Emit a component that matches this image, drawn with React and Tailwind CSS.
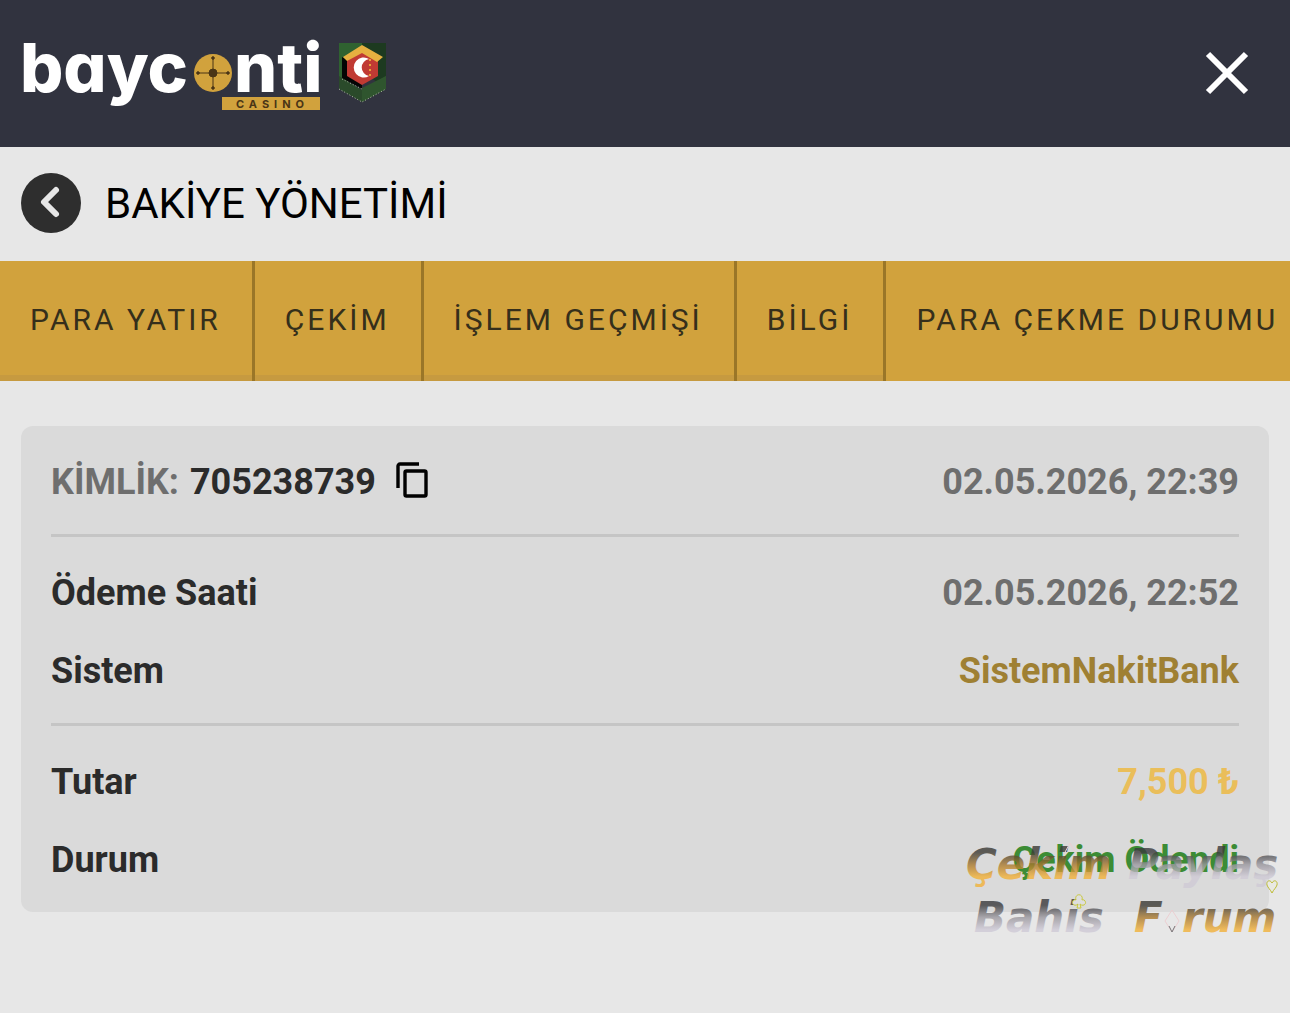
import { useState } from 'react'

const tabs = ['PARA YATIR', 'ÇEKİM', 'İŞLEM GEÇMİŞİ', 'BİLGİ', 'PARA ÇEKME DURUMU']

const Logo = () => (
    <svg width="304" height="104" viewBox="0 -15 304 104" role="img" aria-label="bayconti casino">
        <g fill="#fff" className="font-['Inter',sans-serif] text-[68px] font-extrabold [font-feature-settings:'cv11']">
            <text x="0" y="56">bayc</text>
            <text x="214" y="56">nti</text>
        </g>
        {/* Roulette wheel */}
        <circle cx="193" cy="37" r="19" fill="#d1a23d" />
        <g stroke="#4a3516" strokeWidth="1" fill="#4a3516">
            <path d="M193 22v30M178 37h30" />
            <circle cx="193" cy="37" r="4" />
            <circle cx="193" cy="22" r="1.3" />
            <circle cx="193" cy="52" r="1.3" />
            <circle cx="178" cy="37" r="1.3" />
            <circle cx="208" cy="37" r="1.3" />
        </g>
        <rect x="202" y="61" width="98" height="13" fill="#d1a23d" />
        <text x="216" y="72" fill="#4a3516" className="font-['Inter',sans-serif] text-[11px] font-bold tracking-[5px]">CASINO</text>
    </svg>
)

const Badge = () => (
    <svg width="48" height="62" viewBox="0 0 48 62" aria-hidden="true">
        <path d="M1 1H24V30L1 46Z" fill="#2f6230" />
        <path d="M24 1H48V46L24 30Z" fill="#1d3a20" />
        <path d="M1 34L24 48L48 34V47L24 60L1 47Z" fill="#2a4a2a" />
        <path d="M24 46L48 34V47L24 60Z" fill="#2f552e" />
        <path d="M4 15L24 26V47L4 36Z" fill="#050505" />
        <path d="M24 9L40 18V34L24 43L9 34V18Z" fill="#c03a33" />
        <path d="M5 15L24 3L45 15L39 20L24 11L9 19Z" fill="#e6b040" />
        <path d="M31 17A10 10 0 1 0 31 34A8.6 8.6 0 0 1 31 17Z" fill="#fff" />
        <path d="M32 17v17" stroke="#e8a13a" strokeWidth="2" strokeDasharray="2 3" />
        <path d="M1 47L24 60L48 47M4 37L24 47" fill="none" stroke="#b8bcae" strokeDasharray="1 2" />
    </svg>
)

const Watermark = () => (
    <svg width="326" height="110" viewBox="0 0 326 110" aria-hidden="true"
        className="absolute right-0 -bottom-8 pointer-events-none"
    >
        <defs>
            <linearGradient id="gold" x1="0" y1="0" x2="0" y2="1">
                <stop offset="0.25" stopColor="#3b3a35" />
                <stop offset="0.5" stopColor="#a8782e" />
                <stop offset="0.75" stopColor="#f2b13a" />
            </linearGradient>
            <linearGradient id="silver" x1="0" y1="0" x2="0" y2="1">
                <stop offset="0.25" stopColor="#3a3a3c" />
                <stop offset="0.5" stopColor="#9a979e" />
                <stop offset="0.75" stopColor="#cfcad6" />
            </linearGradient>
        </defs>
        <g opacity="0.8" className="font-['DejaVu_Sans',sans-serif] text-[42px] font-bold italic">
            <text x="2" y="45" fill="url(#gold)">Çekim</text>
            <text x="164" y="45" fill="url(#silver)">Paylaş</text>
            <text x="10" y="98" fill="url(#silver)">Bahis</text>
            <text x="170" y="98" fill="url(#gold)">F</text>
            <text x="218" y="98" fill="url(#gold)">rum</text>
        </g>
        {/* Card suits */}
        <g fill="none" strokeWidth="1">
            <path d="M308 49c-2-4-6-2-5 2 1 3 3 4 5 8 2-4 4-5 5-8 1-4-3-6-5-2z" fill="#e9e9e2" stroke="#bdbb35" />
            <path d="M113 74l1-4c-3 3-7 0-5-3 1-2 3-1 3-1-2-7 8-7 6 0 0 0 2-1 3 1 2 3-2 6-5 3l1 4z" fill="#dedede" stroke="#c9c83c" />
            <path d="M208 76l7 11-7 11-7-11z" stroke="#eccfd2" />
            <path d="M205 92l3 6 3-6" stroke="#77777a" />
            <path d="M100 20l6-11 6 11" stroke="#eccfd2" />
        </g>
    </svg>
)

const Row = ({ label, children }) => (
    <div className="h-[78px] pt-1 flex items-center justify-between">
        <dt>{label}</dt>
        <dd>{children}</dd>
    </div>
)

export default function App() {
    const [active, setActive] = useState(4)

    return (
        <div className="min-h-screen bg-[#e7e7e7] font-['Roboto',sans-serif] text-[#2b2b2b]">
            {/* Header */}
            <header className="h-[147px] pl-5 pr-10 pb-[2px] flex items-center justify-between bg-[#31333f]">
                <a href="#" className="flex items-center gap-[14px]">
                    <Logo />
                    <Badge />
                </a>
                <button aria-label="Kapat">
                    <svg width="46" height="46" viewBox="0 0 46 46" stroke="#fff" strokeWidth="6">
                        <path d="M4 4L42 42M42 4L4 42" />
                    </svg>
                </button>
            </header>

            {/* Title */}
            <div className="h-[114px] px-[21px] pb-[2px] flex items-center gap-6">
                <button aria-label="Geri" className="w-[60px] h-[60px] rounded-full bg-[#2e2e2e] flex items-center justify-center">
                    <svg width="60" height="60" viewBox="0 0 60 60" fill="none" stroke="#e7e7e7" strokeWidth="6" strokeLinecap="round" strokeLinejoin="round">
                        <path d="M35 17L23 29L35 41" />
                    </svg>
                </button>
                <h1 className="pt-[2px] text-[42px] leading-[60px] text-black">BAKİYE YÖNETİMİ</h1>
            </div>

            {/* Tabs */}
            <nav className="flex overflow-hidden bg-[#d1a23d]">
                {tabs.map((tab, i) => (
                    <button key={tab} onClick={() => setActive(i)}
                        className={`h-[120px] pl-[30px] pr-[31px] pb-1 shrink-0 whitespace-nowrap text-[30px] tracking-widest text-[#352f1b] border-r-3 border-r-[#9a7628] ${active === i ? '' : 'shadow-[inset_0_-6px_0_#c69a40]'}`}
                    >{tab}</button>
                ))}
            </nav>

            {/* Transaction */}
            <main className="relative mt-[45px] px-[21px]">
                <dl className="px-[30px] rounded-xl bg-[#dadada] text-4xl font-bold divide-y-3 divide-[#c5c5c5]">
                    <div className="py-[15px]">
                        <div className="h-[78px] pt-1 flex items-center justify-between">
                            <dt className="flex items-center">
                                <span className="text-[#6e6e6e]">KİMLİK:</span>
                                <span className="ml-[11px]">705238739</span>
                                <button aria-label="Kopyala" className="ml-5 pb-1">
                                    <svg width="32" height="36" viewBox="0 0 32 36" fill="none" stroke="#000" strokeWidth="3.4">
                                        <path d="M2 26V4a2 2 0 0 1 2-2H23" />
                                        <rect x="9" y="9" width="21" height="25" rx="1.5" />
                                    </svg>
                                </button>
                            </dt>
                            <dd className="text-[#6e6e6e]">02.05.2026, 22:39</dd>
                        </div>
                    </div>
                    <div className="py-[15px]">
                        <Row label="Ödeme Saati"><span className="text-[#6e6e6e]">02.05.2026, 22:52</span></Row>
                        <Row label="Sistem"><span className="text-[#9f8033]">SistemNakitBank</span></Row>
                    </div>
                    <div className="py-[15px]">
                        <Row label="Tutar"><span className="text-[#eabe5a]">7,500 ₺</span></Row>
                        <Row label="Durum"><span className="text-[#3c8c35]">Çekim Ödendi</span></Row>
                    </div>
                </dl>
                <Watermark />
            </main>
        </div>
    )
}
